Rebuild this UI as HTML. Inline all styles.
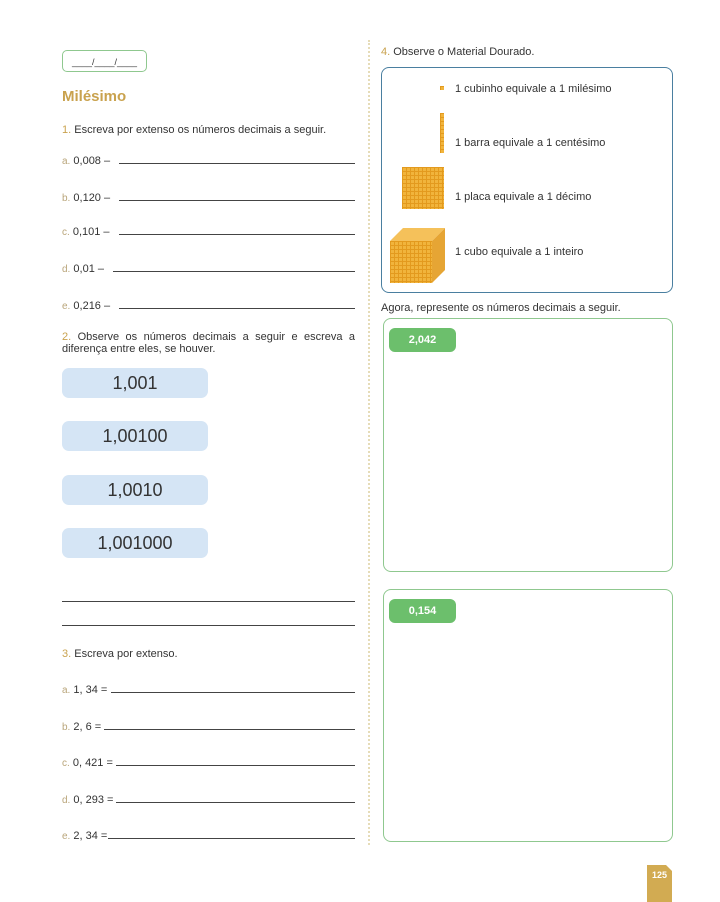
<!DOCTYPE html>
<html><head><meta charset="utf-8"><style>
body{margin:0;width:720px;height:902px;background:#fff;position:relative;font-family:"Liberation Sans",sans-serif;color:#333;overflow:hidden}
.a{position:absolute;white-space:nowrap}
.t{font-size:11px}
.g{color:#c9a24e}
.l{color:#b9a57a;font-size:10px}
.ln{position:absolute;height:1px;background:#444}
.bb{position:absolute;left:62px;width:146px;height:30px;background:#d5e5f5;border-radius:7px;font-size:18px;text-align:center;line-height:30px;color:#333}
.gb{position:absolute;left:383px;width:288px;border:1px solid #8fc88f;border-radius:8px}
.pill{position:absolute;left:5px;top:9px;width:67px;height:24px;background:#6cbf6c;border-radius:6px;color:#fff;font-size:11px;font-weight:bold;text-align:center;line-height:24px}
.sq{position:absolute;background:#f1b43c;background-image:linear-gradient(#e39a1e 1px,transparent 1px),linear-gradient(90deg,#e39a1e 1px,transparent 1px);background-size:4px 4px}
</style></head><body>
<div class="a" style="left:368px;top:40px;height:805px;border-left:2px dotted #e6dcb8"></div>
<div class="a" style="left:62px;top:50px;width:83px;height:20px;border:1px solid #8fc88f;border-radius:5px;font-size:9px;text-align:center;line-height:22px">____/____/____</div>
<div class="a g" style="left:62px;top:88px;font-size:15px;font-weight:bold">Milésimo</div>
<div class="a t" style="left:62px;top:124px"><span class="g">1.</span> Escreva por extenso os números decimais a seguir.</div>
<div class="a t" style="left:62px;top:155px"><span class="l">a.</span> 0,008 –</div><div class="ln" style="left:119px;top:163px;width:236px"></div>
<div class="a t" style="left:62px;top:192px"><span class="l">b.</span> 0,120 –</div><div class="ln" style="left:119px;top:200px;width:236px"></div>
<div class="a t" style="left:62px;top:226px"><span class="l">c.</span> 0,101 –</div><div class="ln" style="left:119px;top:234px;width:236px"></div>
<div class="a t" style="left:62px;top:263px"><span class="l">d.</span> 0,01 –</div><div class="ln" style="left:113px;top:271px;width:242px"></div>
<div class="a t" style="left:62px;top:300px"><span class="l">e.</span> 0,216 –</div><div class="ln" style="left:119px;top:308px;width:236px"></div>
<div class="a t" style="left:62px;top:331px;width:293px;white-space:normal;line-height:12px;text-align:justify;text-align-last:left"><span class="g">2.</span> Observe os números decimais a seguir e escreva a diferença entre eles, se houver.</div>
<div class="bb" style="top:368px">1,001</div>
<div class="bb" style="top:421px">1,00100</div>
<div class="bb" style="top:475px">1,0010</div>
<div class="bb" style="top:528px">1,001000</div>
<div class="ln" style="left:62px;top:601px;width:293px"></div>
<div class="ln" style="left:62px;top:625px;width:293px"></div>
<div class="a t" style="left:62px;top:648px"><span class="g">3.</span> Escreva por extenso.</div>
<div class="a t" style="left:62px;top:684px"><span class="l">a.</span> 1, 34 =</div><div class="ln" style="left:111px;top:692px;width:244px"></div>
<div class="a t" style="left:62px;top:721px"><span class="l">b.</span> 2, 6 =</div><div class="ln" style="left:104px;top:729px;width:251px"></div>
<div class="a t" style="left:62px;top:757px"><span class="l">c.</span> 0, 421 =</div><div class="ln" style="left:116px;top:765px;width:239px"></div>
<div class="a t" style="left:62px;top:794px"><span class="l">d.</span> 0, 293 =</div><div class="ln" style="left:116px;top:802px;width:239px"></div>
<div class="a t" style="left:62px;top:830px"><span class="l">e.</span> 2, 34 =</div><div class="ln" style="left:108px;top:838px;width:247px"></div>

<div class="a t" style="left:381px;top:46px"><span class="g">4.</span> Observe o Material Dourado.</div>
<div class="a" style="left:381px;top:67px;width:290px;height:224px;border:1px solid #4a7fa0;border-radius:8px"></div>
<div class="sq" style="left:440px;top:86px;width:4px;height:4px"></div>
<div class="a t" style="left:455px;top:83px">1 cubinho equivale a 1 milésimo</div>
<div class="sq" style="left:440px;top:113px;width:4px;height:40px"></div>
<div class="a t" style="left:455px;top:137px">1 barra equivale a 1 centésimo</div>
<div class="sq" style="left:402px;top:167px;width:42px;height:42px"></div>
<div class="a t" style="left:455px;top:191px">1 placa equivale a 1 décimo</div>
<div class="sq" style="left:390px;top:241px;width:42px;height:42px"></div>
<svg class="a" style="left:390px;top:228px" width="56" height="56"><polygon points="0,13 13,0 55,0 42,13" fill="#f5c15a"/><polygon points="42,13 55,0 55,42 42,55" fill="#e6a534"/></svg>
<div class="a t" style="left:455px;top:246px">1 cubo equivale a 1 inteiro</div>
<div class="a t" style="left:381px;top:302px">Agora, represente os números decimais a seguir.</div>
<div class="gb" style="top:318px;height:252px"><div class="pill">2,042</div></div>
<div class="gb" style="top:589px;height:251px"><div class="pill">0,154</div></div>
<div class="a" style="left:647px;top:865px;width:25px;height:37px;background:#d2ab52;clip-path:polygon(0 0,19px 0,25px 6px,25px 100%,0 100%);color:#fff;font-size:9px;font-weight:bold;text-align:center;line-height:20px">125</div>
</body></html>
